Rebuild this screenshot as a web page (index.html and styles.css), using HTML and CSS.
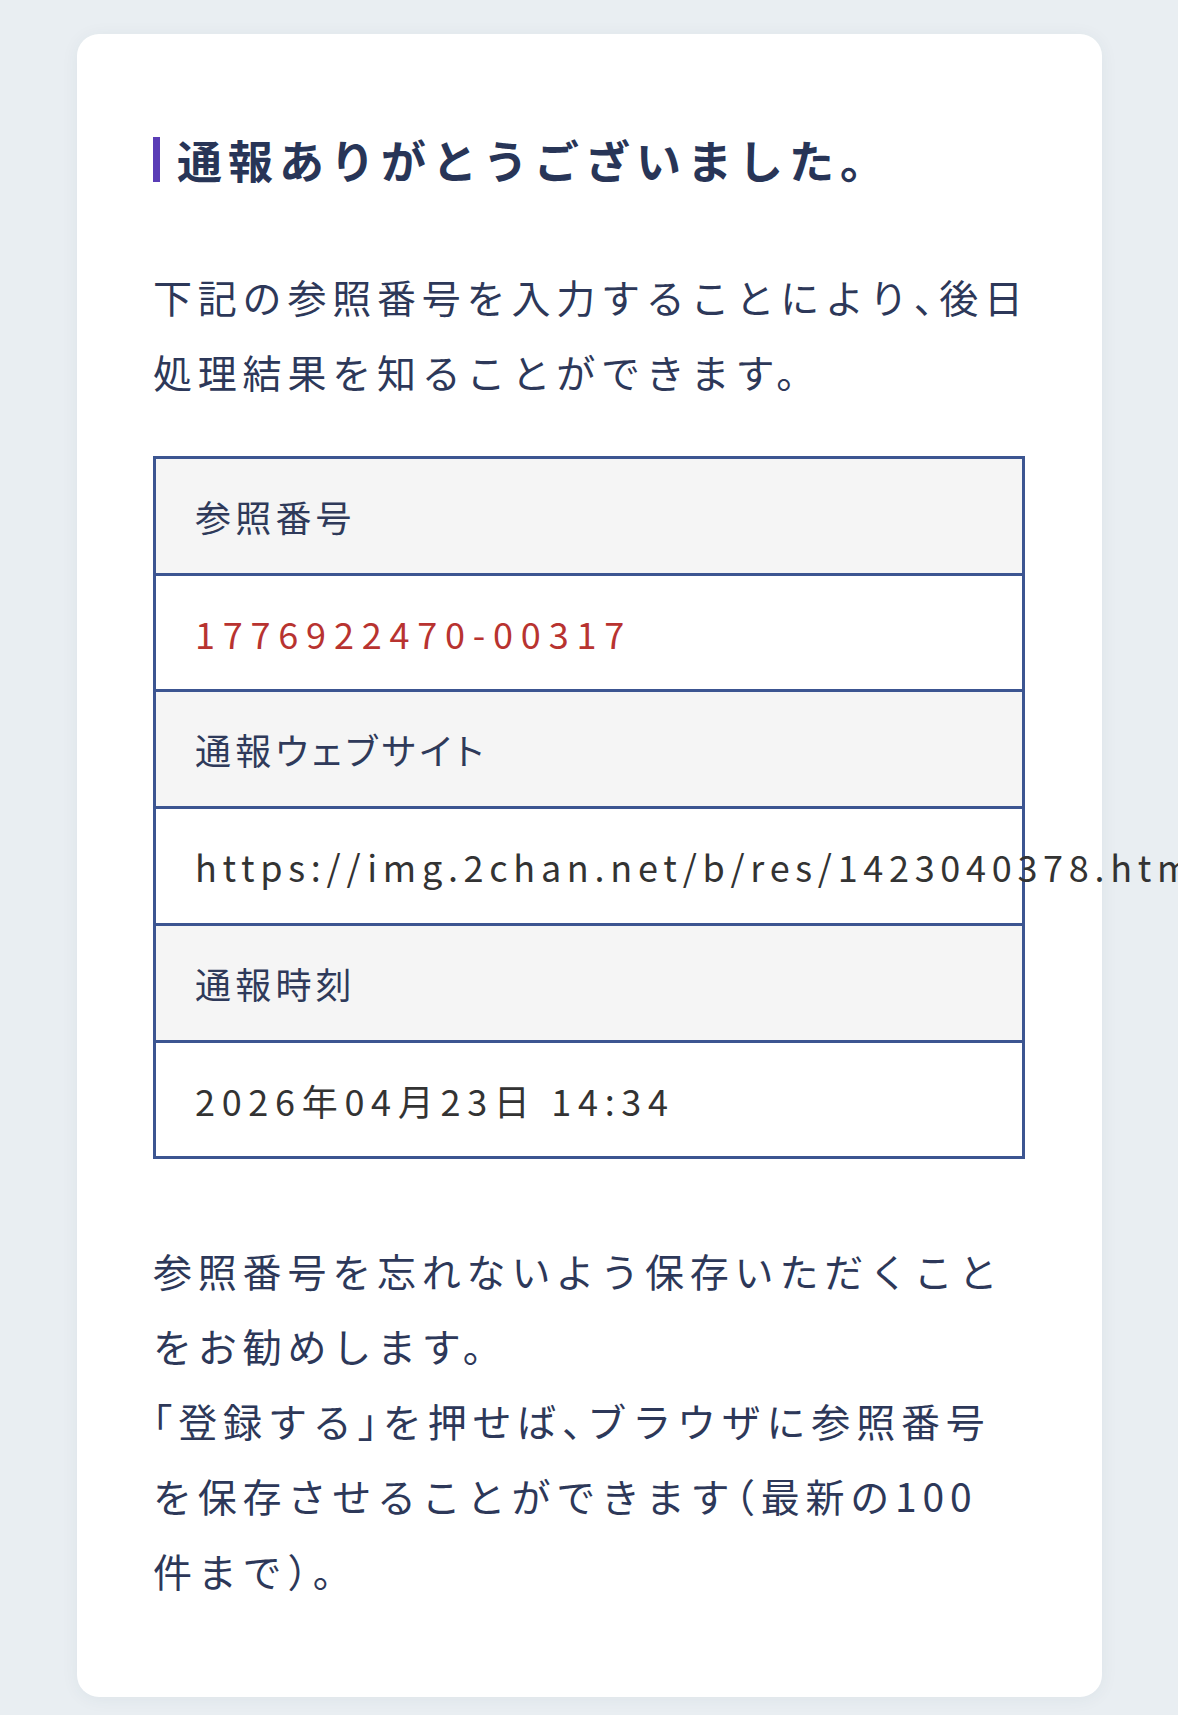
FILE: index.html
```html
<!DOCTYPE html>
<html lang="ja">
<head>
<meta charset="utf-8">
<title>通報ありがとうございました。</title>
<link rel="stylesheet" href="styles.css">
</head>
<body>
<main class="page">
  <section class="card">
    <h1 class="title">通報ありがとうございました。</h1>
    <p class="text">下記の参照番号を入力することにより<span class="hw">、</span>後日<br>処理結果を知ることができます。</p>
    <div class="info">
      <div class="row label">参照番号</div>
      <div class="row value num">1776922470-00317</div>
      <div class="row label">通報<span class="pk">ウェブサイト</span></div>
      <div class="row value url">https://img.2chan.net/b/res/1423040378.htm</div>
      <div class="row label">通報時刻</div>
      <div class="row value date">2026年04月23日 14:34</div>
    </div>
    <p class="text note">参照番号を忘れないよう保存いただくこと<br>をお勧めします。<br><span class="hw">「</span>登録する<span class="hw">」</span>を押せば<span class="hw">、</span>ブラウザに参照番号<br>を保存させることができます<span class="hw">（</span>最新の100<br>件まで<span class="hw">）</span>。</p>
  </section>
</main>
</body>
</html>
```

FILE: styles.css
```css
html, body {
  margin: 0;
  padding: 0;
}
body {
  background: #e9eef2;
  font-family: "Noto Sans CJK JP", "Noto Sans", sans-serif;
  color: #2b3658;
}
.page {
  padding: 34px 76px 18px 77px;
}
.card {
  background: #ffffff;
  border-radius: 22px;
  box-shadow: 0 2px 18px rgba(40, 60, 90, 0.06);
  padding: 103px 77px 89px 76px;
}
.title {
  margin: 0;
  font-size: 45px;
  line-height: 45px;
  font-weight: 700;
  letter-spacing: 6px;
  border-left: 7px solid #5a3db6;
  padding-left: 17px;
  color: #283557;
}
.text {
  margin: 77px 0 0;
  font-size: 39px;
  line-height: 75px;
  letter-spacing: 5.8px;
  white-space: nowrap;
  color: #2d3859;
}
.hw {
  font-feature-settings: "halt";
}
.pk {
  font-feature-settings: "palt";
}
.info {
  margin-top: 47px;
  border: 3px solid #3c5591;
}
.row {
  padding: 37px 39px 36px;
  font-size: 36px;
  line-height: 40.7px;
  letter-spacing: 4.2px;
  white-space: nowrap;
}
.row + .row {
  border-top: 3px solid #3c5591;
}
.label {
  background: #f5f5f5;
  color: #2f3a5a;
}
.value {
  background: #ffffff;
  color: #333333;
}
.url {
  letter-spacing: 5.7px;
}
.num {
  color: #b83330;
  letter-spacing: 7.8px;
}
.date {
  letter-spacing: 6.7px;
}
.note {
  margin-top: 74px;
}
```
